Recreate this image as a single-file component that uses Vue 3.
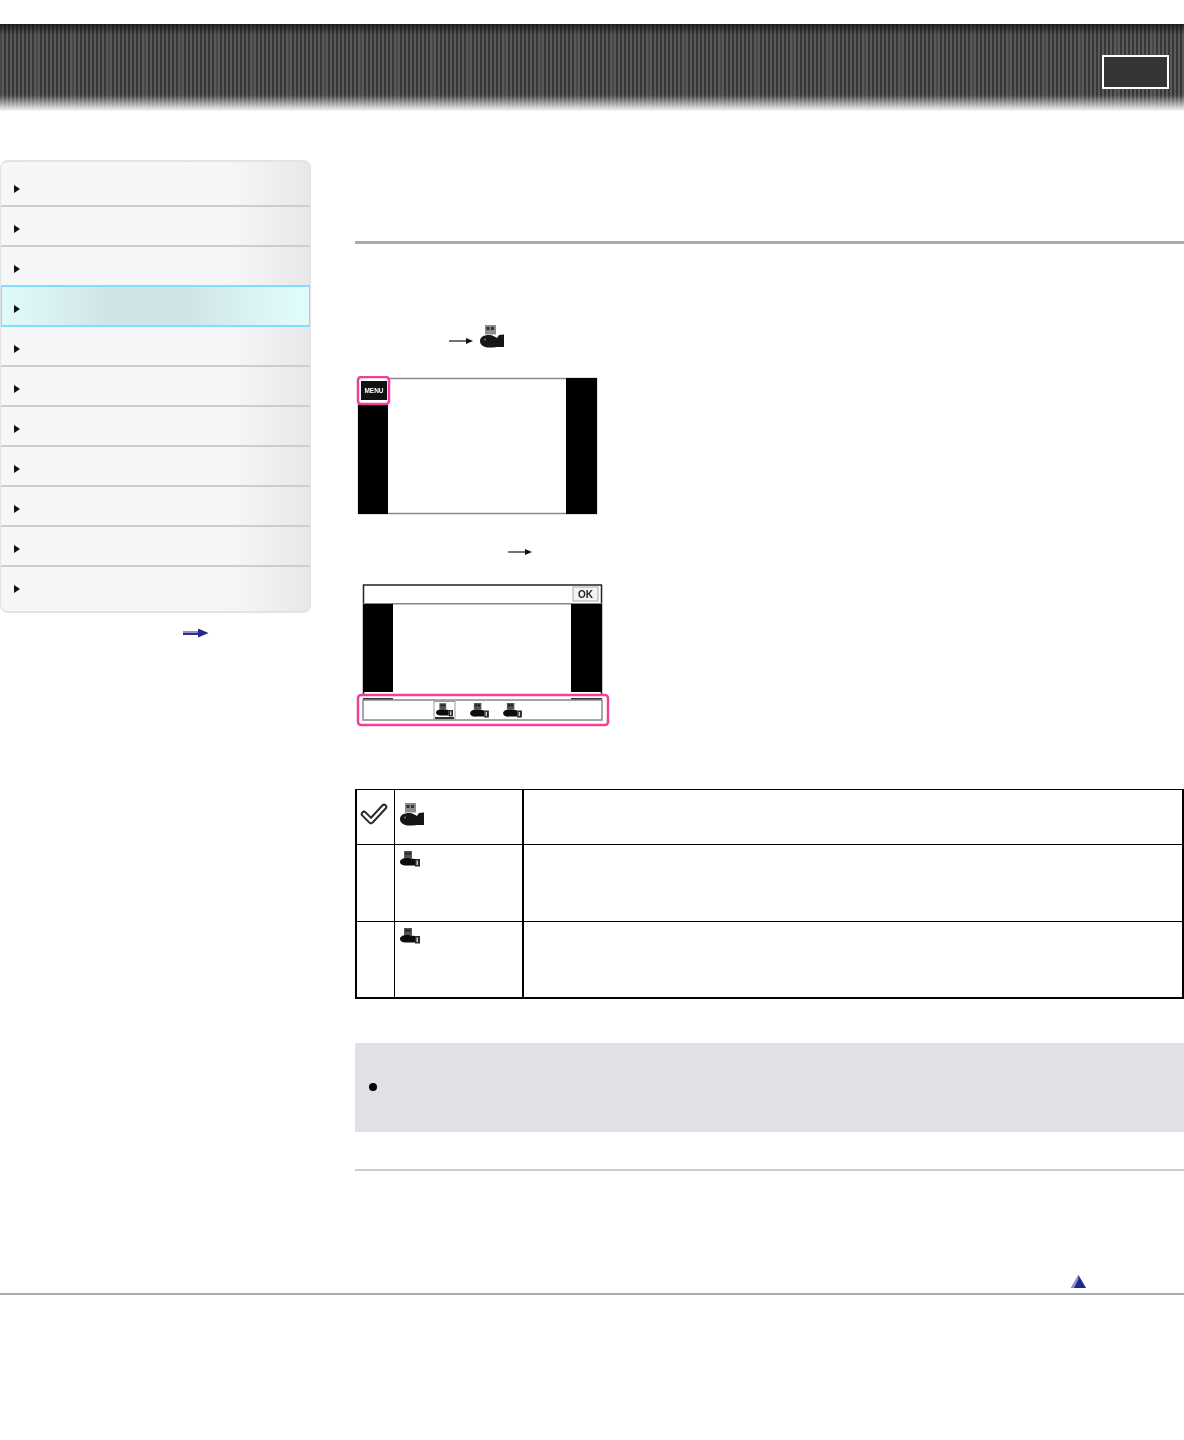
<script setup>
const navItems = [1, 2, 3, 4, 5, 6, 7, 8, 9, 10, 11];
const activeItem = 4;
</script>

<template>
  <div class="page">
    <svg class="defs" width="0" height="0">
      <symbol id="movie-big" viewBox="0 0 24 23">
        <rect x="5" y="0" width="11" height="9.5" fill="#8d8d8d" />
        <rect x="6.5" y="2" width="3" height="3" fill="#333" />
        <rect x="11" y="2" width="3" height="3" fill="#333" />
        <path d="M0 16 C0 12 4 10 9 10 C13 10 15 12 17 13 L19 10 L24 9.5 V22 H17 C14 22.5 12 22.5 9 22.5 C4 22.5 0 20 0 16 Z" fill="#161616" />
        <circle cx="5" cy="14.5" r="1" fill="#777" />
      </symbol>
      <symbol id="movie-small" viewBox="0 0 20 16">
        <rect x="4" y="0" width="8" height="7" fill="#555" />
        <rect x="5.5" y="1.5" width="2" height="2" fill="#111" />
        <rect x="8.5" y="1.5" width="2" height="2" fill="#111" />
        <path d="M0 11 C0 8.5 3 7 7 7 C10 7 12 7.5 15 8 V14.5 H7 C3 15 0 13.5 0 11 Z" fill="#0c0c0c" />
        <rect x="15" y="8" width="5" height="7.5" fill="#2a2a2a" />
        <rect x="16.5" y="9.5" width="1.5" height="4.5" fill="#ccc" />
      </symbol>
    </svg>

    <header class="top-bar">
      <div class="top-button"></div>
    </header>

    <div class="content">
      <aside class="side">
        <ul class="nav">
          <li
            v-for="n in navItems"
            :key="n"
            :class="{ 'nav-item': true, active: n === activeItem }"
          >
            <span class="nav-arrow"></span>
          </li>
        </ul>
        <div class="more">
          <svg width="26" height="10" viewBox="0 0 26 10">
            <rect x="0" y="3" width="18" height="2" fill="#8f93c4" />
            <rect x="0" y="5" width="18" height="2" fill="#2b2f8f" />
            <path d="M15 0.5 L25.5 5 L15 9.5 Z" fill="#23278a" />
          </svg>
        </div>
      </aside>

      <main class="main">
        <div class="title-rule"></div>

        <div class="step step-one">
          <svg class="arrow" width="24" height="10" viewBox="0 0 24 10">
            <path d="M0 5 H18" stroke="#111" stroke-width="1.2" />
            <path d="M17 2 L24 5 L17 8 Z" fill="#111" />
          </svg>
          <svg class="icon-big" width="24" height="23"><use href="#movie-big" /></svg>
        </div>

        <svg class="shot shot-one" width="242" height="139" viewBox="0 0 242 139">
          <rect x="2.5" y="2.5" width="238" height="135" fill="#fff" stroke="#8a8a8a" stroke-width="1.5" />
          <rect x="2" y="29" width="30" height="109" fill="#000" />
          <rect x="210" y="2" width="31" height="136" fill="#000" />
          <rect x="2" y="1" width="31" height="27" rx="3" fill="#fff" stroke="#f0409a" stroke-width="2.5" />
          <rect x="5" y="5" width="26" height="19" fill="#111" />
          <text x="18" y="17" class="menu-text">MENU</text>
        </svg>

        <div class="step step-two">
          <svg class="arrow" width="24" height="10" viewBox="0 0 24 10">
            <path d="M0 5 H18" stroke="#111" stroke-width="1.2" />
            <path d="M17 2 L24 5 L17 8 Z" fill="#111" />
          </svg>
        </div>

        <svg class="shot shot-two" width="254" height="144" viewBox="0 0 254 144">
          <rect x="7.5" y="1" width="238" height="116" fill="#fff" stroke="#222" stroke-width="1.5" />
          <rect x="7" y="19" width="239" height="1.5" fill="#888" />
          <rect x="7" y="20" width="30" height="88" fill="#000" />
          <rect x="215" y="20" width="31" height="88" fill="#000" />
          <rect x="217" y="3" width="25" height="14" fill="#f4f4f4" stroke="#aaa" />
          <text x="229.5" y="13.5" class="ok-text">OK</text>
          <rect x="2" y="111" width="250" height="30" rx="3" fill="#fff" stroke="#f0409a" stroke-width="2.5" />
          <rect x="7" y="114" width="30" height="2" fill="#333" />
          <rect x="215" y="114" width="31" height="2" fill="#333" />
          <rect x="7" y="116" width="239" height="20" fill="none" stroke="#888" stroke-width="1.5" />
          <rect x="78" y="117.5" width="21" height="18" fill="#fff" stroke="#999" />
          <rect x="79" y="133" width="19" height="2" fill="#333" />
          <use href="#movie-small" x="80" y="119" width="17" height="14" />
          <use href="#movie-small" x="114" y="119" width="19" height="15" />
          <use href="#movie-small" x="147" y="119" width="19" height="15" />
        </svg>

        <table class="opts">
          <tbody>
            <tr class="row-short">
              <td class="c-check">
                <svg class="check" width="28" height="24" viewBox="0 0 28 24">
                  <path d="M4 12 L11 19 L24 5" fill="none" stroke="#2a2a2a" stroke-width="6.5" stroke-linejoin="round" stroke-linecap="round" />
                  <path d="M4 12 L11 19 L24 5" fill="none" stroke="#fff" stroke-width="2.5" stroke-linejoin="round" stroke-linecap="round" />
                </svg>
              </td>
              <td class="c-icon">
                <svg class="icon-big" width="24" height="23"><use href="#movie-big" /></svg>
              </td>
              <td></td>
            </tr>
            <tr>
              <td class="c-check"></td>
              <td class="c-icon">
                <svg class="icon-small" width="20" height="16"><use href="#movie-small" /></svg>
              </td>
              <td></td>
            </tr>
            <tr class="row-last">
              <td class="c-check"></td>
              <td class="c-icon">
                <svg class="icon-small" width="20" height="16"><use href="#movie-small" /></svg>
              </td>
              <td></td>
            </tr>
          </tbody>
        </table>

        <div class="note"><span class="dot"></span></div>
        <div class="end-rule"></div>

        <div class="to-top">
          <svg width="15" height="13" viewBox="0 0 15 13">
            <path d="M7.5 0 L15 13 H0 Z" fill="#1c2a8c" />
            <path d="M7.5 0 L0 13 H3 L7.5 4 Z" fill="#8f97c8" />
          </svg>
        </div>
      </main>
    </div>

    <div class="foot-rule"></div>
  </div>
</template>

<style>
html,
body {
  background: #fff;
}
</style>

<style scoped>
.page {
  height: 1440px;
  padding-top: 24px;
  box-sizing: border-box;
  overflow: hidden;
  font-family: "Liberation Sans", Arial, sans-serif;
}

.defs {
  position: absolute;
}

/* header strip */
.top-bar {
  height: 87px;
  display: flex;
  justify-content: flex-end;
  align-items: flex-start;
  padding: 31px 15px 0 0;
  box-sizing: border-box;
  background:
    linear-gradient(to bottom, rgba(255, 255, 255, 0) 71px, rgba(255, 255, 255, 0.96) 87px),
    linear-gradient(to bottom, rgba(0, 0, 0, 0.6) 0, rgba(0, 0, 0, 0) 11px),
    repeating-linear-gradient(to right, rgba(255, 255, 255, 0.08) 0, rgba(255, 255, 255, 0.08) 2px, rgba(255, 255, 255, 0) 2px, rgba(255, 255, 255, 0) 36px),
    repeating-linear-gradient(to right, #383838 0, #383838 2.5px, #5a5a5a 2.5px, #5a5a5a 4px);
}

.top-button {
  width: 67px;
  height: 34px;
  box-sizing: border-box;
  border: 2px solid #fff;
  background: #343434;
}

.content {
  display: flex;
  align-items: flex-start;
  padding-top: 49px;
}

/* left menu */
.side {
  width: 311px;
  flex: none;
}

.nav {
  list-style: none;
  margin: 0;
  padding: 0;
  height: 453px;
  box-sizing: border-box;
  border: 1px solid #e3e3e3;
  border-top-width: 2px;
  border-bottom-width: 2px;
  border-radius: 8px;
  overflow: hidden;
  background: linear-gradient(to right, #f7f7f7 0, #f6f6f6 75%, #e8e8ea 100%);
}

.nav-item {
  height: 40px;
  box-sizing: border-box;
  border-bottom: 2px solid #cdcdcd;
  padding: 18px 0 0 14px;
  margin: 0 -1px;
}

.nav-item:first-child {
  height: 45px;
  padding-top: 23px;
}

.nav-item:last-child {
  border-bottom: 0;
  padding-top: 18px;
}

.nav-item.active {
  height: 42px;
  margin: -2px -1px 0;
  padding-top: 18px;
  border: 2px solid #7fdfff;
  padding-left: 12px;
  background: linear-gradient(to right, #e0fbfc 0, #d0e4e7 35%, #d0e4e7 60%, #e0fbfc 95%);
}

.nav-arrow {
  display: block;
  width: 0;
  height: 0;
  border-left: 6px solid #111;
  border-top: 4px solid transparent;
  border-bottom: 4px solid transparent;
}

.more {
  padding: 15px 0 0 183px;
  line-height: 0;
}

/* main column */
.main {
  flex: 1;
  margin-left: 44px;
  min-width: 0;
}

.title-rule {
  height: 3px;
  margin-top: 81px;
  background: #aaa;
}

.step {
  display: flex;
  align-items: flex-end;
}

.step-one {
  margin-top: 81px;
  padding-left: 94px;
  gap: 7px;
  height: 23px;
}

.step-one .arrow {
  margin-bottom: 2px;
}

.step-two {
  margin-top: 32px;
  padding-left: 153px;
  height: 10px;
}

.shot {
  display: block;
  filter: blur(0.35px);
}

.shot-one {
  margin: 28px 0 0 1px;
}

.shot-two {
  margin: 27px 0 0 1px;
}

.menu-text {
  font-size: 6.5px;
  font-weight: 700;
  fill: #fff;
  text-anchor: middle;
}

.ok-text {
  font-size: 10px;
  font-weight: 700;
  fill: #222;
  text-anchor: middle;
}

.icon-big,
.icon-small {
  display: block;
  filter: blur(0.3px);
}

/* options table */
.opts {
  width: 829px;
  margin-top: 61px;
  border-collapse: separate;
  border-spacing: 0;
  table-layout: fixed;
  border-top: 1px solid #000;
  border-left: 2px solid #000;
  border-right: 2px solid #000;
  border-bottom: 2px solid #000;
  box-sizing: border-box;
}

.opts td {
  height: 77px;
  box-sizing: border-box;
  vertical-align: top;
  padding: 0;
  border-top: 1px solid #000;
}

.opts .row-short td {
  height: 54px;
  border-top: 0;
}

.opts .row-last td {
  height: 76px;
}

.c-check {
  width: 38px;
  border-right: 1px solid #000;
}

.c-icon {
  width: 129px;
  border-right: 2px solid #000;
}

.check {
  display: block;
  margin: 12px 0 0 3px;
}

.c-icon .icon-big {
  margin: 13px 0 0 5px;
}

.c-icon .icon-small {
  margin: 6px 0 0 5px;
}

.note {
  height: 89px;
  margin-top: 44px;
  background: #dfe1e6;
  padding: 40px 0 0 14px;
  box-sizing: border-box;
}

.dot {
  display: block;
  width: 8px;
  height: 8px;
  border-radius: 50%;
  background: #000;
}

.end-rule {
  height: 2px;
  margin-top: 37px;
  background: #ccc;
}

.to-top {
  margin-top: 104px;
  padding-left: 716px;
  line-height: 0;
}

.foot-rule {
  position: absolute;
  top: 1293px;
  left: 0;
  right: 0;
  height: 2px;
  background: #aaa;
}
</style>
